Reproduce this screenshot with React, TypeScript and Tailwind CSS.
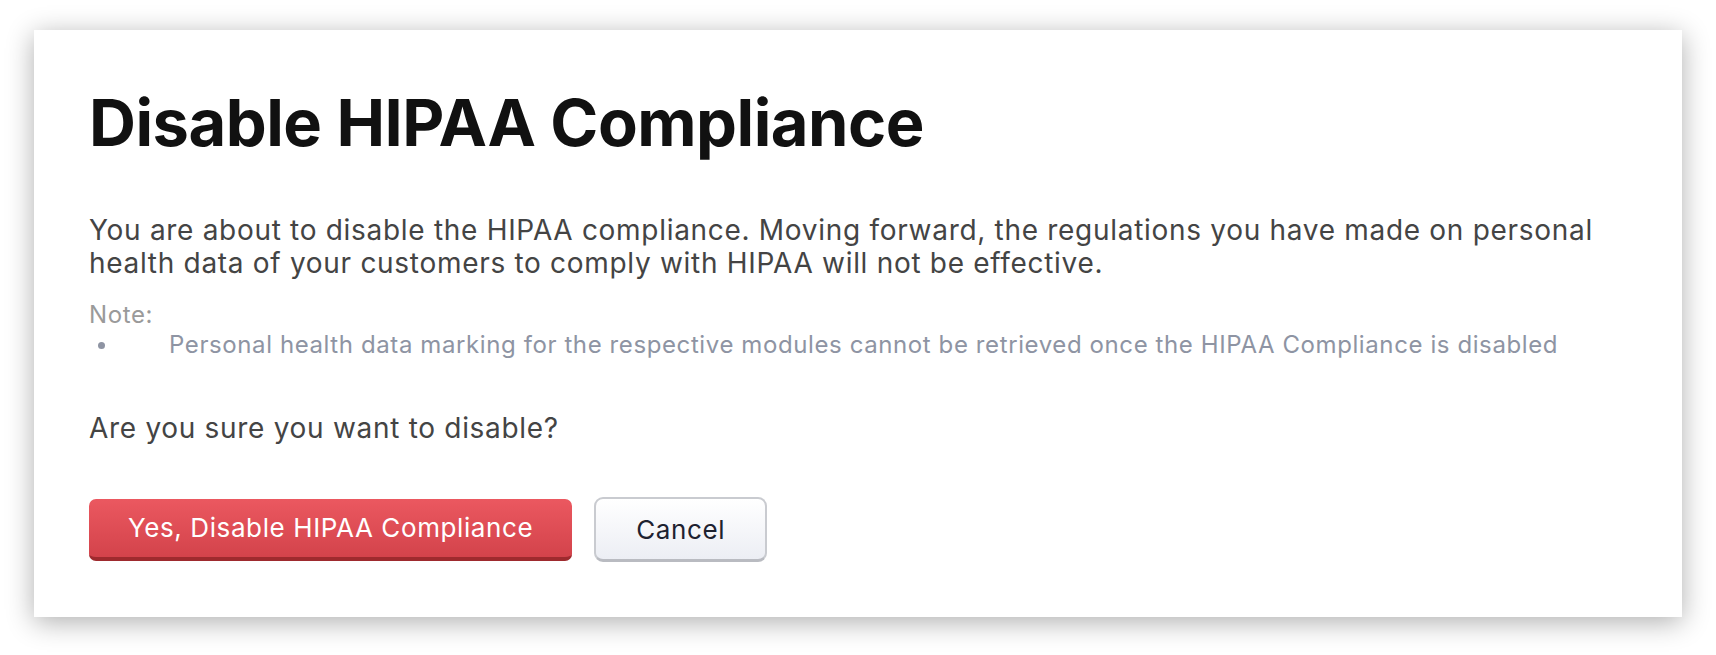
const bodyFont = "font-['Inter','Noto_Sans',sans-serif]";

function NoteBlock() {
  return (
    <div className="mt-[20px] text-[24px] leading-[30px] tracking-[0.6px]">
      <div className="text-[#9a9a9a]">Note:</div>
      <div className="flex items-center text-[#8e94a3]">
        <span className="ml-[9px] h-[7px] w-[7px] shrink-0 rounded-full bg-[#8e94a3]" />
        <span className="ml-[64px]">
          Personal health data marking for the respective modules cannot be retrieved once the HIPAA Compliance is disabled
        </span>
      </div>
    </div>
  );
}

function Actions() {
  return (
    <div className="mt-[52px] flex items-center gap-[22px]">
      <button className="h-[62px] rounded-[7px] border-b-[4px] border-[#9e2a2e] bg-gradient-to-b from-[#eb5860] to-[#d3434b] px-[39px] text-[26px] tracking-[0.6px] text-white">
        Yes, Disable HIPAA Compliance
      </button>
      <button className="h-[65px] rounded-[9px] border-2 border-[#c9cbd0] border-b-[3px] border-b-[#b9bbc1] bg-gradient-to-b from-white to-[#eceef4] px-[40px] text-[26px] tracking-[0.6px] text-[#1e2230]">
        Cancel
      </button>
    </div>
  );
}

export default function App() {
  return (
    <div className={`min-h-[655px] w-full bg-white pt-[30px] pl-[34px] ${bodyFont}`}>
      <div className="w-[1648px] h-[587px] bg-white shadow-[0_5px_26px_rgba(0,0,0,0.32)] px-[55px] pt-[53px]">
        <h1 className="text-[65px] leading-[80px] font-bold text-[#111111] tracking-[-0.5px]">
          Disable HIPAA Compliance
        </h1>
        <p className="mt-[51px] text-[28px] leading-[33px] tracking-[0.7px] text-[#444444]">
          You are about to disable the HIPAA compliance. Moving forward, the regulations you have made on personal
          <br />
          health data of your customers to comply with HIPAA will not be effective.
        </p>
        <NoteBlock />
        <p className="mt-[52px] text-[28px] leading-[33px] tracking-[0.7px] text-[#444444]">
          Are you sure you want to disable?
        </p>
        <Actions />
      </div>
    </div>
  );
}
